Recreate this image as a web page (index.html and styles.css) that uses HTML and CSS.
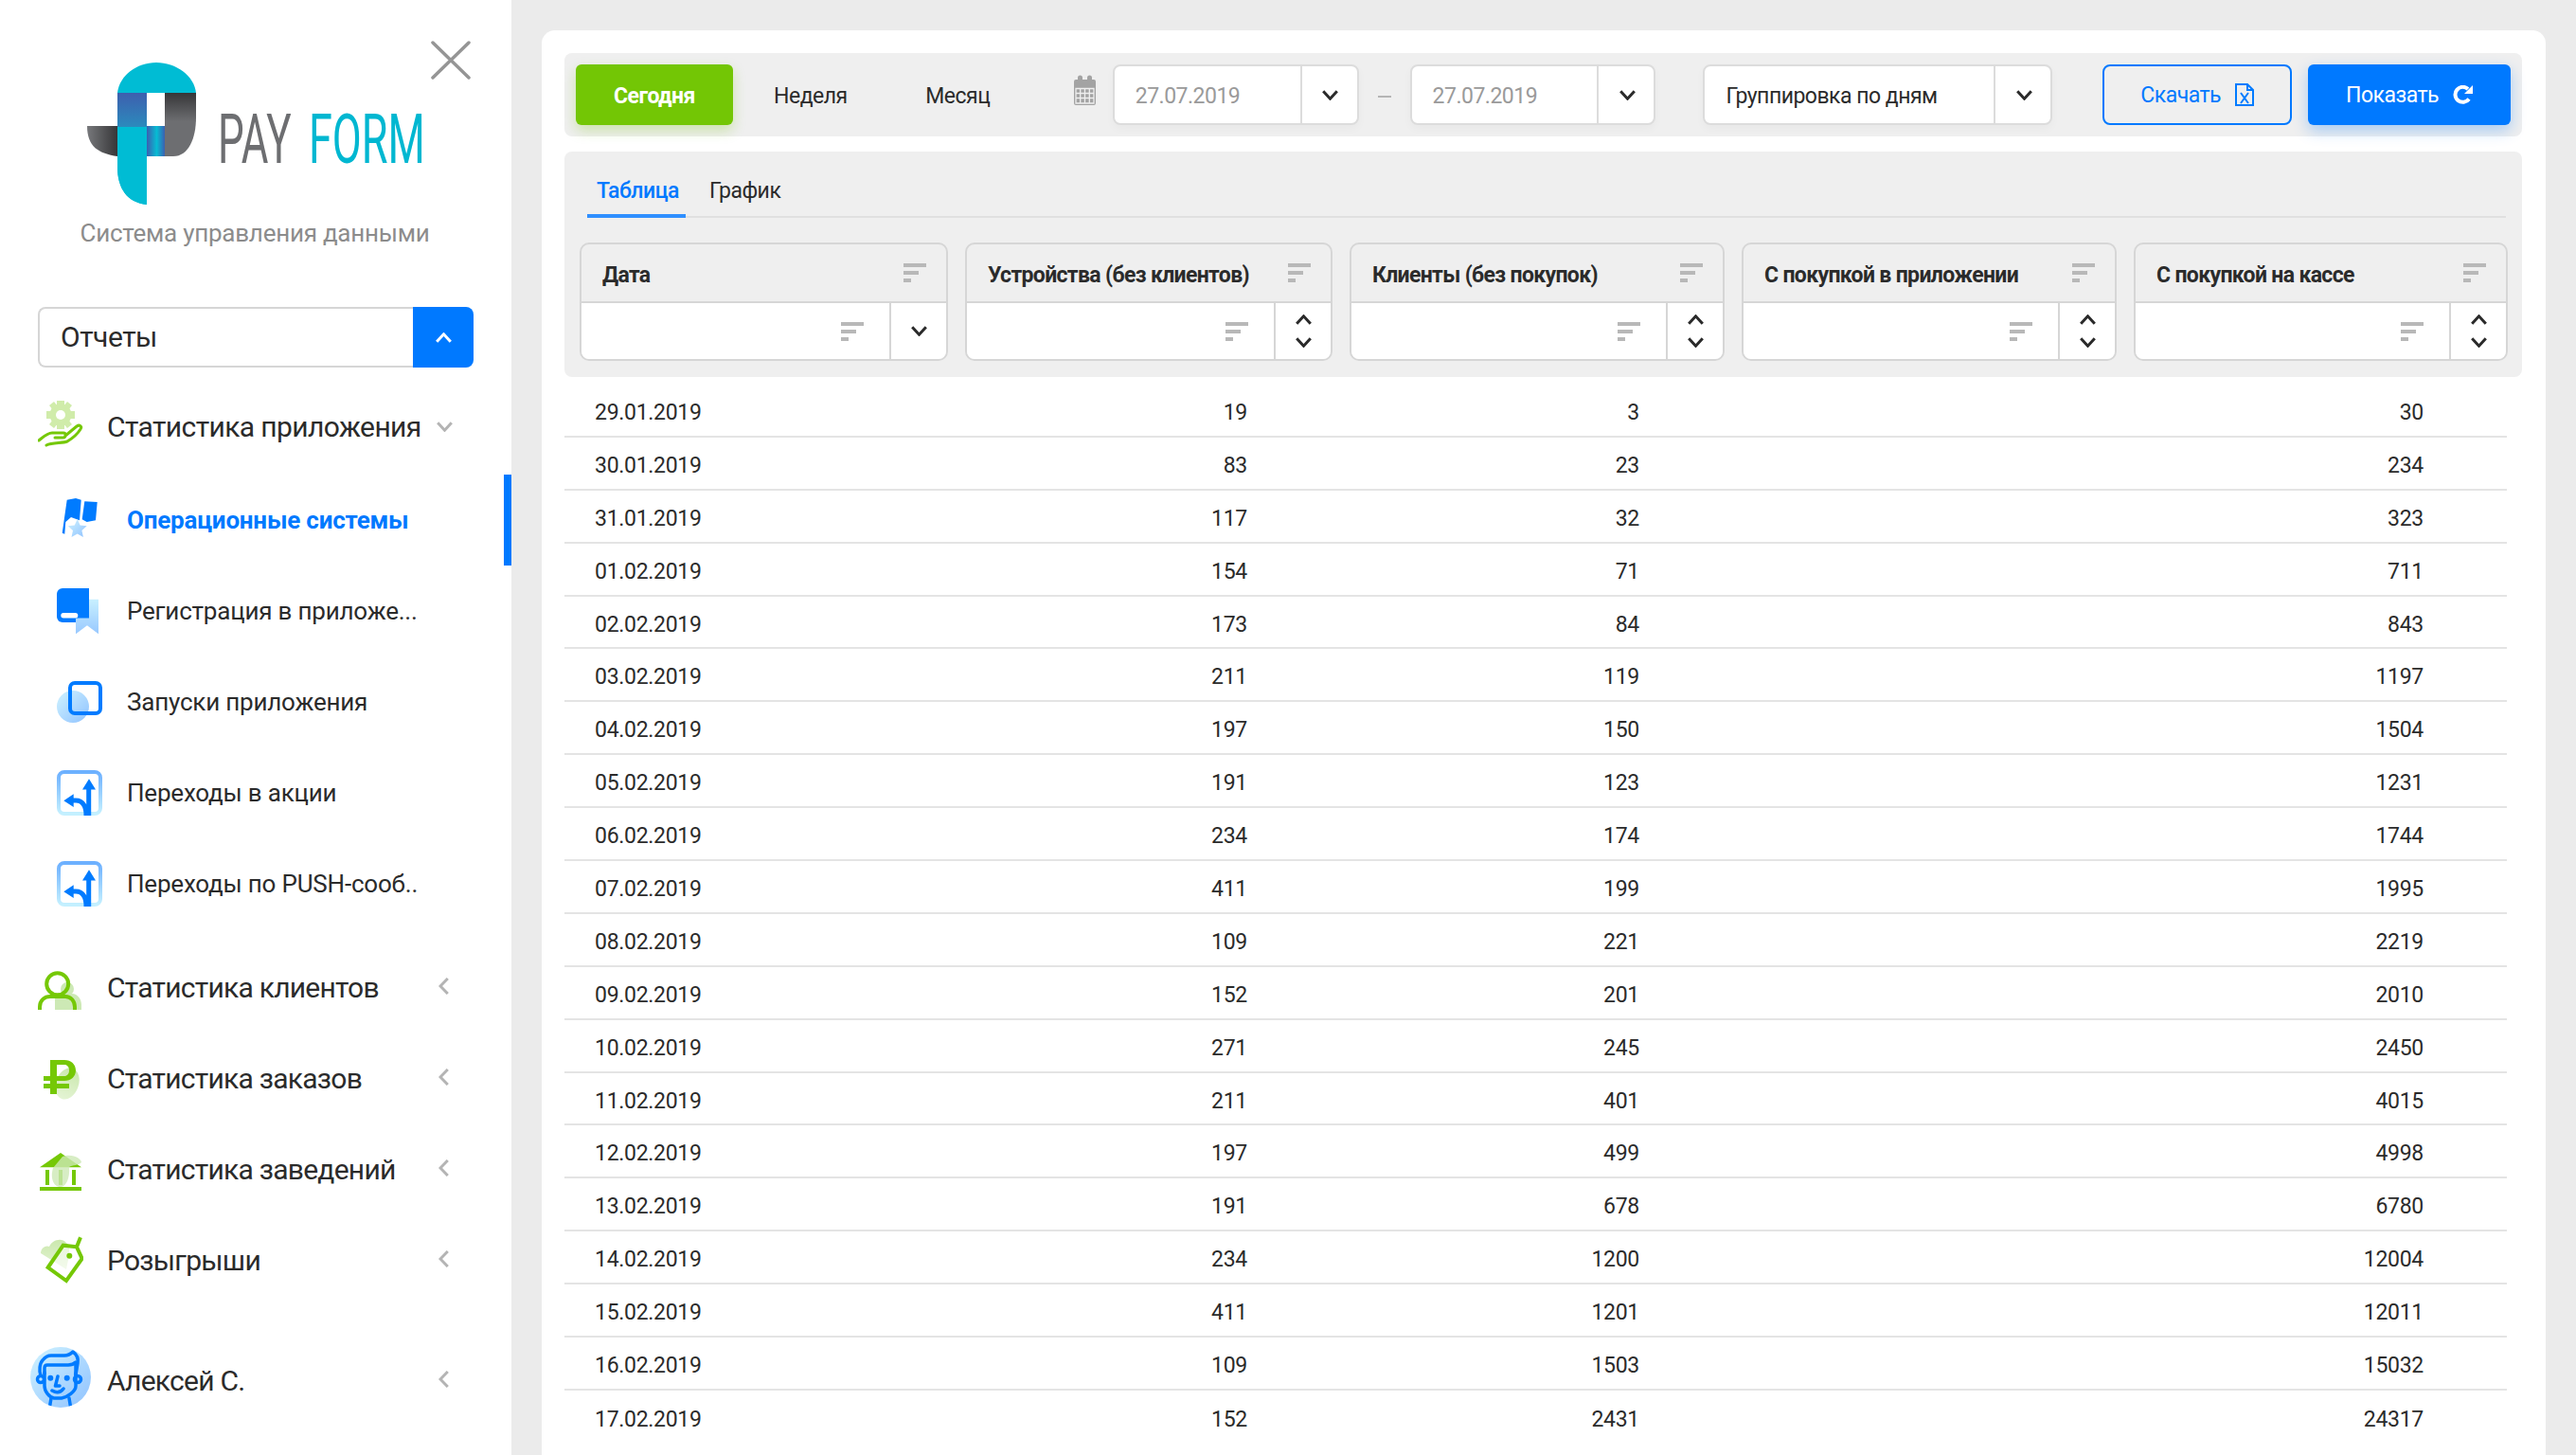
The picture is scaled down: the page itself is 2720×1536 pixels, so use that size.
FILE: index.html
```html
<!DOCTYPE html>
<html lang="en">
<head>
    <meta charset="UTF-8">
    <title>Pay Form</title>
    <link rel="stylesheet" href="styles.css">
</head>
<body>
    <svg class="defs" width="0" height="0">
        <defs>
            <linearGradient id="softBlue" x1="1" y1="1" x2="0" y2="0"><stop offset="0" stop-color="#8fc2ff"/><stop offset="1" stop-color="#d0f3ff"/></linearGradient>
            <linearGradient id="softBlueV" x1="0" y1="0" x2="0" y2="1"><stop offset="0" stop-color="#c8f0ff"/><stop offset="1" stop-color="#98c8ff"/></linearGradient>
            <linearGradient id="frameBlue" x1="0" y1="0" x2="0" y2="1"><stop offset="0" stop-color="#6cb0ff"/><stop offset="1" stop-color="#c4f0ff"/></linearGradient>
            <linearGradient id="softGreen" x1="0" y1="0" x2="0" y2="1"><stop offset="0" stop-color="#cbe8ae"/><stop offset="1" stop-color="#e4f4d4"/></linearGradient>
            <linearGradient id="logoBlue" x1="0" y1="0" x2="0" y2="1"><stop offset="0" stop-color="#3e5fae"/><stop offset=".5" stop-color="#1fa6c6"/><stop offset="1" stop-color="#00bcd4"/></linearGradient>
            <linearGradient id="logoMid" x1="0" y1="0" x2="1" y2="0"><stop offset="0" stop-color="#3c5fb0"/><stop offset=".55" stop-color="#06bcd3"/><stop offset="1" stop-color="#3c5fb0"/></linearGradient>
            <linearGradient id="logoGrey" x1="0" y1="0" x2="0" y2="1"><stop offset="0" stop-color="#363638"/><stop offset=".45" stop-color="#6d6e71"/><stop offset="1" stop-color="#6d6e71"/></linearGradient>
            <linearGradient id="logoWing" x1="0" y1="0" x2="1" y2="0"><stop offset="0" stop-color="#77787b"/><stop offset="1" stop-color="#363638"/></linearGradient>
            <symbol id="sort" viewBox="0 0 24 20"><path fill="#b8b8b8" d="M0 0h24v4H0zM0 8h16v4H0zM0 16h8v4H0z"/></symbol>
            <symbol id="down" viewBox="0 0 17 11"><path fill="none" stroke="currentColor" stroke-width="3" d="M1.2 1.2l7.3 8 7.3-8"/></symbol>
            <symbol id="up" viewBox="0 0 17 11"><path fill="none" stroke="currentColor" stroke-width="3" d="M1.2 9.8l7.3-8 7.3 8"/></symbol>
            <symbol id="left" viewBox="0 0 11 18"><path fill="none" stroke="#b4b4b4" stroke-width="3" d="M9.8 1L2 9l7.8 8"/></symbol>
            <symbol id="turn" viewBox="0 0 48 64">
                <rect x="2" y="10" width="44" height="44" rx="6" fill="none" stroke="url(#frameBlue)" stroke-width="4"/>
                <path fill="#007bff" d="M27 28.5L34 17.3l7 11.2zM7.3 40.3l10.4-7V47z"/>
                <path fill="none" stroke="#007bff" stroke-width="5" d="M33.7 27v29M16 40h4c8 0 11 7 11 16"/>
            </symbol>
        </defs>
    </svg>

    <aside class="sidebar">
        <svg class="close" width="42" height="41" viewBox="0 0 42 41"><path fill="none" stroke="#959595" stroke-width="3.5" stroke-linecap="round" d="M2 2l38 37M40 2L2 39"/></svg>

        <svg class="logo" width="420" height="160" viewBox="60 60 420 160">
            <path fill="#00bcd4" d="M124 98c2-18 20-32 41-32s40 14 42 32z"/>
            <path fill="url(#logoBlue)" d="M124 98h31v118c-20-2-31-16-31-40z"/>
            <path fill="#00bcd4" d="M124 134h31v82c-20-2-31-16-31-40z"/>
            <path fill="url(#logoGrey)" d="M174 98h33v26c0 22-8 41-24 41h-9z"/>
            <path fill="url(#logoMid)" d="M155 133h19v32h-19z"/>
            <path fill="url(#logoWing)" d="M92 133h32v32c-20-3-32-10-32-32z"/>
            <text class="logo-pay" transform="translate(230 172) scale(.61 1)">PAY</text>
            <text class="logo-form" transform="translate(326 172) scale(.625 1)">FORM</text>
        </svg>
        <div class="tagline">Система управления данными</div>

        <div class="section-select">
            <div class="section-name">Отчеты</div>
            <div class="section-btn"><svg width="17" height="11"><use href="#up"/></svg></div>
        </div>

        <nav class="menu">
            <div class="menu-item">
                <svg class="menu-icon" viewBox="0 0 48 64" width="48" height="64">
                    <g fill="#d0ecaa">
                        <circle cx="24" cy="17" r="11.5"/>
                        <path d="M20 2h8v6h-8zM20 26h8v6h-8zM9 13h6v8H9zM33 13h6v8h-6zM12 7l5-4 4 5-5 4zM36 7l-5-4-4 5 5 4zM12 27l5 4 4-5-5-4zM36 27l-5 4-4-5 5-4z"/>
                    </g>
                    <circle cx="24" cy="17" r="5" fill="#fff"/>
                    <path fill="none" stroke="#75c806" stroke-width="3" stroke-linecap="round" stroke-linejoin="round" d="M1 44c5-4 9-8 14-8h12c3 0 3 4.500 0 5H18M29 39l12-10c3-2 6 0 4 3-3 5-9 10-14 13-5 2-16 1-22 4"/>
                </svg>
                <span class="menu-title menu-title-long">Статистика приложения</span>
                <svg class="menu-down" width="17" height="11"><use href="#down"/></svg>
            </div>

            <div class="sub-item active">
                <svg class="sub-icon" viewBox="0 0 48 64" width="48" height="64">
                    <path fill="#007bff" d="M5.700 45.700l5-35 9.300-1.700 5.700 1.700-1.700 21.600-9-3.300-5.700 5-1 12.700zM29.300 12.300l13.400.7-1.700 19.300-9.300 1.700-5-2.700z"/>
                    <path fill="url(#softBlue)" d="M21.700 31l2.900 6.600 7.100.7-5.300 4.800 1.500 7-6.200-3.600-6.200 3.600 1.500-7-5.300-4.800 7.100-.7z"/>
                </svg>
                <span>Операционные системы</span>
            </div>
            <div class="sub-item">
                <svg class="sub-icon" viewBox="0 0 48 64" width="48" height="64">
                    <path fill="#007bff" d="M6 8h28v36H6a6 6 0 0 1-6-6V14a6 6 0 0 1 6-6z"/>
                    <rect x="4.300" y="34" width="18" height="5.500" rx="2.700" fill="#fff"/>
                    <path fill="url(#softBlueV)" d="M20 39.500h14V19.700h10v36.600l-12-9-12 9z"/>
                </svg>
                <span>Регистрация в приложе...</span>
            </div>
            <div class="sub-item">
                <svg class="sub-icon" viewBox="0 0 48 64" width="48" height="64">
                    <circle cx="17" cy="37" r="17" fill="url(#softBlue)"/>
                    <rect x="14" y="12" width="32" height="32" rx="5" fill="none" stroke="#007bff" stroke-width="4"/>
                </svg>
                <span>Запуски приложения</span>
            </div>
            <div class="sub-item">
                <svg class="sub-icon" width="48" height="64"><use href="#turn"/></svg>
                <span>Переходы в акции</span>
            </div>
            <div class="sub-item">
                <svg class="sub-icon" width="48" height="64"><use href="#turn"/></svg>
                <span>Переходы по PUSH-сооб..</span>
            </div>

            <div class="menu-item menu-gap">
                <svg class="menu-icon" viewBox="0 0 48 64" width="48" height="64">
                    <circle cx="31" cy="33" r="7" fill="#cde9b5"/>
                    <path fill="#cde9b5" d="M18 55V44c0-4 4-6 8-6h10c6 0 10 6 10 12v5z"/>
                    <circle cx="20.700" cy="27.700" r="11.500" fill="none" stroke="#75c806" stroke-width="4"/>
                    <path fill="none" stroke="#75c806" stroke-width="4" d="M2 55v-3c0-7 5-11 11-11h16c6 0 10 5 10 11v3"/>
                </svg>
                <span class="menu-title">Статистика клиентов</span>
                <svg class="menu-left" width="11" height="18"><use href="#left"/></svg>
            </div>
            <div class="menu-item">
                <svg class="menu-icon" viewBox="0 0 48 64" width="48" height="64">
                    <ellipse cx="31" cy="37" rx="12" ry="17" transform="rotate(20 31 37)" fill="url(#softGreen)"/>
                    <path fill="#75c806" d="M13 12h15c7 0 12 4.500 12 11s-5 11-12 11h-8v3h13v5H20v6h-7v-6H6v-5h7v-3H6v-5h7zm7 5v12h8c3 0 5-2.500 5-6s-2-6-5-6z"/>
                </svg>
                <span class="menu-title">Статистика заказов</span>
                <svg class="menu-left" width="11" height="18"><use href="#left"/></svg>
            </div>
            <div class="menu-item">
                <svg class="menu-icon" viewBox="0 0 48 64" width="48" height="64">
                    <path fill="#75c806" d="M2 29.300L24 14l22 15.300zM8 32h4v16H8zM22 32h4v16h-4zM36 32h4v16h-4zM2 50h44v4H2z"/>
                    <path fill="#cde9b5" opacity=".8" d="M26 18c10-4 20 2 20 6-2 3-10 3-13 5 1 11-3 21-9 21-8 0-11-10-8-20z"/>
                </svg>
                <span class="menu-title">Статистика заведений</span>
                <svg class="menu-left" width="11" height="18"><use href="#left"/></svg>
            </div>
            <div class="menu-item">
                <svg class="menu-icon" viewBox="0 0 48 64" width="48" height="64">
                    <path fill="url(#softGreen)" d="M3 24c0-6 6-9 9-7 3-7 13-10 18-4 4 3 3 9 3 13l-3 15z"/>
                    <path fill="#fff" d="M10.700 39l16-23.300 14.300 1.600 5.700 12.400L30 53z" opacity=".55"/>
                    <path fill="none" stroke="#75c806" stroke-width="4" d="M10.700 39l16-23.300 14.300 1.600 5.700 12.400L30 53zM41 17.300l4-10"/>
                    <circle cx="33.300" cy="26.700" r="3" fill="#75c806"/>
                </svg>
                <span class="menu-title">Розыгрыши</span>
                <svg class="menu-left" width="11" height="18"><use href="#left"/></svg>
            </div>

            <div class="menu-item user-item">
                <svg class="user-pic" viewBox="0 0 64 72" width="64" height="72">
                    <clipPath id="userClip"><circle cx="32" cy="32" r="32"/></clipPath>
                    <circle cx="32" cy="32" r="32" fill="url(#softBlue)"/>
                    <g clip-path="url(#userClip)" fill="none" stroke="#007bff" stroke-width="3.500" stroke-linejoin="round" stroke-linecap="round">
                        <path d="M11 30c-2-5-1-13 2-16 3-4 6-5 9-5h14c4 0 7-2 9-4 4 3 6 7 5 12l-2 12"/>
                        <path d="M15 28v-6c0-2 1-3 3-3h22c3 0 6-1 8-3v14"/>
                        <path d="M15 27v14c0 6 5 12 10 13h8c6-1 15-7 15-13V28"/>
                        <circle cx="11" cy="34" r="3.500"/>
                        <circle cx="50" cy="34" r="3.500"/>
                        <path d="M29 31l-2.500 10 4.500 0M23 46c5 3 9 2 12-2M22 54l-2 12M41 54l2 12"/>
                    </g>
                    <circle cx="21.300" cy="32.700" r="3" fill="#007bff"/>
                    <circle cx="38.700" cy="32.700" r="3" fill="#007bff"/>
                </svg>
                <span class="menu-title">Алексей С.</span>
                <svg class="menu-left" width="11" height="18"><use href="#left"/></svg>
            </div>
        </nav>
    </aside>

    <main class="main">
        <div class="card">
            <div class="toolbar">
                <button class="btn-today">Сегодня</button>
                <button class="btn-period week">Неделя</button>
                <button class="btn-period month">Месяц</button>
                <svg class="calendar" width="23" height="33" viewBox="0 0 23 33">
                    <path fill="#a3a3a3" d="M2 5h2v-2a2.500 2.500 0 0 1 5 0v2h5v-2a2.500 2.500 0 0 1 5 0v2h2a2 2 0 0 1 2 2v23a2 2 0 0 1-2 2H2a2 2 0 0 1-2-2V7a2 2 0 0 1 2-2z"/>
                    <path fill="none" stroke="#efefef" stroke-width="1.300" d="M2 14.500h19v15.500H2zM2 19.500h19M2 24.500h19M6.700 14.500v15.500M11.500 14.500v15.500M16.300 14.500v15.500"/>
                </svg>
                <div class="field date-field">
                    <div class="field-value muted">27.07.2019</div>
                    <div class="field-arrow"><svg width="17" height="11"><use href="#down"/></svg></div>
                </div>
                <div class="dash"></div>
                <div class="field date-field">
                    <div class="field-value muted">27.07.2019</div>
                    <div class="field-arrow"><svg width="17" height="11"><use href="#down"/></svg></div>
                </div>
                <div class="field group-field">
                    <div class="field-value">Группировка по дням</div>
                    <div class="field-arrow"><svg width="17" height="11"><use href="#down"/></svg></div>
                </div>
                <button class="btn-download">
                    Скачать
                    <svg width="20" height="24" viewBox="0 0 20 24"><path fill="none" stroke="#007bff" stroke-width="2" d="M1 1h12l6 6v16H1zM13 1v6h6"/><path fill="none" stroke="#007bff" stroke-width="2" d="M6 10l8 11M14 10L6 21"/></svg>
                </button>
                <button class="btn-show">
                    Показать
                    <svg width="21" height="20" viewBox="0 0 21 20"><path fill="none" stroke="#fff" stroke-width="4" d="M17 14.500A8 8 0 1 1 16 4"/><path fill="#fff" d="M21 0v9h-9z"/></svg>
                </button>
            </div>

            <div class="panel">
                <div class="tabs">
                    <div class="tab active">Таблица</div>
                    <div class="tab">График</div>
                </div>
                <div class="filters">
                    <div class="filter">
                        <div class="filter-head"><b>Дата</b><svg width="24" height="20"><use href="#sort"/></svg></div>
                        <div class="filter-body">
                            <div class="filter-input"><svg width="24" height="20"><use href="#sort"/></svg></div>
                            <div class="filter-arrows"><svg width="17" height="11"><use href="#down"/></svg></div>
                        </div>
                    </div>
                    <div class="filter">
                        <div class="filter-head"><b>Устройства (без клиентов)</b><svg width="24" height="20"><use href="#sort"/></svg></div>
                        <div class="filter-body">
                            <div class="filter-input"><svg width="24" height="20"><use href="#sort"/></svg></div>
                            <div class="filter-arrows"><svg width="17" height="11"><use href="#up"/></svg><svg width="17" height="11"><use href="#down"/></svg></div>
                        </div>
                    </div>
                    <div class="filter">
                        <div class="filter-head"><b>Клиенты (без покупок)</b><svg width="24" height="20"><use href="#sort"/></svg></div>
                        <div class="filter-body">
                            <div class="filter-input"><svg width="24" height="20"><use href="#sort"/></svg></div>
                            <div class="filter-arrows"><svg width="17" height="11"><use href="#up"/></svg><svg width="17" height="11"><use href="#down"/></svg></div>
                        </div>
                    </div>
                    <div class="filter">
                        <div class="filter-head"><b>С покупкой в приложении</b><svg width="24" height="20"><use href="#sort"/></svg></div>
                        <div class="filter-body">
                            <div class="filter-input"><svg width="24" height="20"><use href="#sort"/></svg></div>
                            <div class="filter-arrows"><svg width="17" height="11"><use href="#up"/></svg><svg width="17" height="11"><use href="#down"/></svg></div>
                        </div>
                    </div>
                    <div class="filter">
                        <div class="filter-head"><b>С покупкой на кассе</b><svg width="24" height="20"><use href="#sort"/></svg></div>
                        <div class="filter-body">
                            <div class="filter-input"><svg width="24" height="20"><use href="#sort"/></svg></div>
                            <div class="filter-arrows"><svg width="17" height="11"><use href="#up"/></svg><svg width="17" height="11"><use href="#down"/></svg></div>
                        </div>
                    </div>
                </div>
            </div>

            <div class="rows">
                <div class="row"><span>29.01.2019</span><span>19</span><span>3</span><span></span><span>30</span></div>
                <div class="row"><span>30.01.2019</span><span>83</span><span>23</span><span></span><span>234</span></div>
                <div class="row"><span>31.01.2019</span><span>117</span><span>32</span><span></span><span>323</span></div>
                <div class="row"><span>01.02.2019</span><span>154</span><span>71</span><span></span><span>711</span></div>
                <div class="row"><span>02.02.2019</span><span>173</span><span>84</span><span></span><span>843</span></div>
                <div class="row"><span>03.02.2019</span><span>211</span><span>119</span><span></span><span>1197</span></div>
                <div class="row"><span>04.02.2019</span><span>197</span><span>150</span><span></span><span>1504</span></div>
                <div class="row"><span>05.02.2019</span><span>191</span><span>123</span><span></span><span>1231</span></div>
                <div class="row"><span>06.02.2019</span><span>234</span><span>174</span><span></span><span>1744</span></div>
                <div class="row"><span>07.02.2019</span><span>411</span><span>199</span><span></span><span>1995</span></div>
                <div class="row"><span>08.02.2019</span><span>109</span><span>221</span><span></span><span>2219</span></div>
                <div class="row"><span>09.02.2019</span><span>152</span><span>201</span><span></span><span>2010</span></div>
                <div class="row"><span>10.02.2019</span><span>271</span><span>245</span><span></span><span>2450</span></div>
                <div class="row"><span>11.02.2019</span><span>211</span><span>401</span><span></span><span>4015</span></div>
                <div class="row"><span>12.02.2019</span><span>197</span><span>499</span><span></span><span>4998</span></div>
                <div class="row"><span>13.02.2019</span><span>191</span><span>678</span><span></span><span>6780</span></div>
                <div class="row"><span>14.02.2019</span><span>234</span><span>1200</span><span></span><span>12004</span></div>
                <div class="row"><span>15.02.2019</span><span>411</span><span>1201</span><span></span><span>12011</span></div>
                <div class="row"><span>16.02.2019</span><span>109</span><span>1503</span><span></span><span>15032</span></div>
                <div class="row"><span>17.02.2019</span><span>152</span><span>2431</span><span></span><span>24317</span></div>
            </div>
        </div>
    </main>
</body>
</html>
```

FILE: styles.css
```css
* { box-sizing: border-box; }
html, body { height: 100%; }
body { margin: 0; height: 1536px; overflow: hidden; display: flex; background: #ebebeb; color: #2b2b2b; font-family: Roboto, "Noto Sans", sans-serif; font-size: 23px; letter-spacing: -.5px; }
button { font-family: inherit; font-size: 23px; letter-spacing: -.5px; border: none; cursor: pointer; }
svg { display: block; flex: none; }
.defs { width: 0; height: 0; }

/* sidebar */
.sidebar { position: relative; width: 540px; flex: none; background: #fff; padding-top: 60px; }
.close { position: absolute; left: 455px; top: 43px; }
.logo { margin-left: 60px; }
.logo-pay, .logo-form { font-family: Roboto, sans-serif; font-weight: 400; font-size: 72px; letter-spacing: 0; }
.logo-pay { fill: #6d6e71; }
.logo-form { fill: #00b7d1; }
.tagline { margin-top: 9px; text-align: center; font-size: 26px; letter-spacing: -.25px; line-height: 34px; color: #8c8c8c; padding-right: 2px; }
.section-select { display: flex; width: 460px; height: 64px; margin: 61px 0 0 40px; }
.section-name { flex: 1; padding-left: 22px; font-size: 30px; letter-spacing: -.5px; line-height: 60px; border: 2px solid #d6d6d6; border-right: none; border-radius: 8px 0 0 8px; }
.section-btn { width: 64px; display: flex; align-items: center; justify-content: center; background: #0079ff; color: #fff; border-radius: 0 8px 8px 0; }
.menu { margin-top: 17px; }
.menu-item { display: flex; align-items: center; height: 96px; padding-left: 40px; font-size: 30px; letter-spacing: -.75px; }
.menu-gap { margin-top: 14px; }
.menu-icon { margin-right: 25px; }
.menu-title { width: 348px; padding-bottom: 2px; }
.menu-title-long { padding-bottom: 5px; letter-spacing: -.6px; }
.menu-down { color: #b4b4b4; margin-top: -5px; }
.menu-left { margin-left: 2px; margin-top: -5px; }
.user-item { margin-top: 31px; padding-left: 32px; }
.user-pic { margin-right: 17px; }
.sub-item { display: flex; align-items: center; height: 96px; padding-left: 60px; font-size: 26px; letter-spacing: -.2px; border-right: 8px solid transparent; }
.sub-icon { margin-right: 26px; }
.sub-item.active { border-right-color: #0079ff; color: #0079ff; font-weight: 700; }

/* main */
.main { flex: 1; min-width: 0; padding: 32px 32px 0; }
.card { height: 100%; background: #fff; border-radius: 14px 14px 0 0; padding: 24px 25px 0 24px; }
.toolbar { display: flex; align-items: flex-start; height: 88px; padding: 12px; background: #efefef; border-radius: 8px; }
.btn-today { width: 166px; height: 64px; padding: 2px 0 0; background: #73c605; color: #fff; font-weight: 700; border-radius: 6px; box-shadow: 0 6px 14px rgba(115, 198, 5, .28); }
.btn-period { height: 64px; background: none; color: #2b2b2b; padding: 2px 0 0; }
.week { width: 164px; }
.month { width: 147px; }
.calendar { margin: 11px 18px 0 49px; }
.field { display: flex; height: 64px; background: #fff; border: 2px solid #dcdcdc; border-radius: 8px; box-shadow: 0 4px 10px rgba(0, 0, 0, .03); }
.date-field { width: 260px; }
.group-field { width: 369px; margin-left: 50px; }
.field-value { flex: 1; padding: 2px 0 0 22px; line-height: 60px; }
.muted { color: #9a9a9a; }
.field-arrow { width: 60px; padding-left: 2px; display: flex; align-items: center; justify-content: center; border-left: 2px solid #dcdcdc; }
.dash { width: 14px; height: 2px; margin: 33px 20px 0; background: #b5b5b5; }
.btn-download { display: flex; align-items: center; justify-content: center; gap: 15px; width: 200px; height: 64px; margin-left: 53px; background: #efefef; color: #0079ff; border: 2px solid #0079ff; border-radius: 8px; padding: 0; }
.btn-show { display: flex; align-items: center; justify-content: center; gap: 15px; width: 214px; height: 64px; margin-left: 17px; background: #0079ff; color: #fff; border-radius: 6px; padding: 0; box-shadow: 0 6px 16px rgba(0, 121, 255, .3); }

/* tabs and filters */
.panel { height: 238px; margin-top: 16px; padding: 26px 17px 0 16px; background: #efefef; border-radius: 8px; }
.tabs { display: flex; margin: 0 0 26px 8px; border-bottom: 2px solid #e0e0e0; width: 2026px; }
.tab { height: 44px; margin: 0 15px -2px 0; padding: 0 10px 8px; line-height: 32px; border-bottom: 4px solid transparent; }
.tab.active { width: 104px; text-align: center; color: #0079ff; font-weight: 500; border-bottom-color: #2f8fff; margin-right: 15px; }
.filters { display: grid; grid-template-columns: 389px 388px 396px 396px 395px; column-gap: 18px; }
.filter { height: 125px; border: 2px solid #d6d6d6; border-radius: 10px; overflow: hidden; }
.filter-head { display: flex; align-items: center; justify-content: space-between; height: 60px; padding: 0 21px 0 22px; }
.filter-head b { padding-top: 4px; letter-spacing: -.65px; }
.filter-body { display: flex; height: 61px; background: #fff; border-top: 2px solid #d6d6d6; }
.filter-input { flex: 1; display: flex; justify-content: flex-end; padding: 20px 27px 0 0; }
.filter-arrows { width: 60px; display: flex; flex-direction: column; align-items: center; justify-content: center; gap: 13px; border-left: 2px solid #d6d6d6; color: #2b2b2b; }

/* data rows */
.rows { margin-top: 8px; width: 2051px; letter-spacing: -.3px; }
.row { display: grid; grid-template-columns: 290px 431px 414px 414px 414px; align-items: center; height: 55.9px; padding-top: 5px; border-bottom: 2px solid #e4e4e4; }
.row:last-child { border-bottom: none; }
.row span { text-align: right; }
.row span:first-child { text-align: left; padding-left: 32px; }
```
